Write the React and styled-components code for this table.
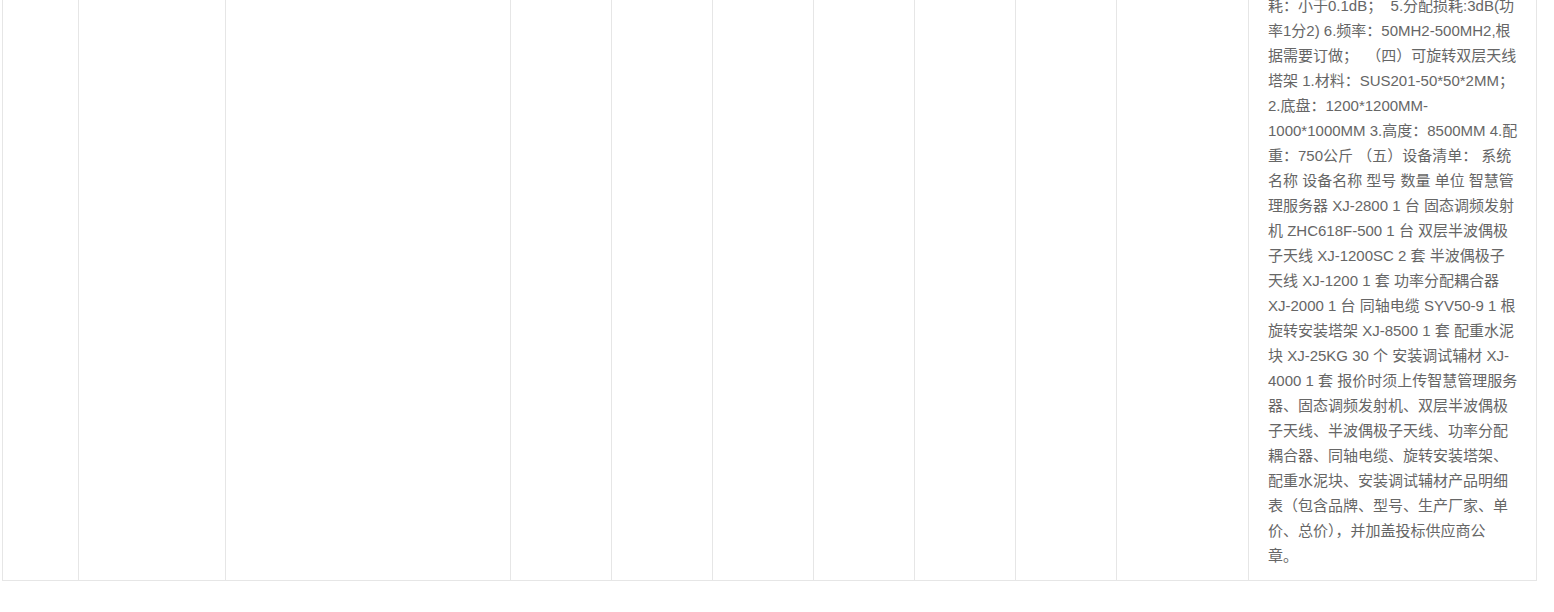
import React from 'react';
import styled, { createGlobalStyle } from 'styled-components';

const GlobalStyle = createGlobalStyle`
  html, body {
    margin: 0;
    padding: 0;
    background: #fff;
  }
  body {
    font-family: "Liberation Sans", "Noto Sans CJK SC", sans-serif;
    font-size: 15px;
    color: #666;
  }
`;

const Page = styled.div`
  height: 100vh;
  overflow: hidden;
  padding: 0 2px;
  box-sizing: border-box;
`;

// the capture is scrolled: the top of the row sits above the window
const Table = styled.table`
  width: 1535px;
  margin-top: -18px;
  table-layout: fixed;
  border-collapse: collapse;
  border-spacing: 0;
`;

const Cell = styled.td`
  border: 1px solid #e6e6e6;
  vertical-align: top;
  padding: 10px 19px 12px;
  line-height: 25px;
  color: #666;
`;

const Line = styled.span`
  display: block;
  white-space: pre;
`;

const widths = [76, 147, 285, 101, 101, 101, 101, 101, 101, 132, 288];

const lines = [
  '耗：小于0.1dB；  5.分配损耗:3dB(功',
  '率1分2) 6.频率：50MH2-500MH2,根',
  '据需要订做；  （四）可旋转双层天线',
  '塔架 1.材料：SUS201-50*50*2MM；',
  '2.底盘：1200*1200MM-',
  '1000*1000MM 3.高度：8500MM 4.配',
  '重：750公斤 （五）设备清单： 系统',
  '名称 设备名称 型号 数量 单位 智慧管',
  '理服务器 XJ-2800 1 台 固态调频发射',
  '机 ZHC618F-500 1 台 双层半波偶极',
  '子天线 XJ-1200SC 2 套 半波偶极子',
  '天线 XJ-1200 1 套 功率分配耦合器',
  'XJ-2000 1 台 同轴电缆 SYV50-9 1 根',
  '旋转安装塔架 XJ-8500 1 套 配重水泥',
  '块 XJ-25KG 30 个 安装调试辅材 XJ-',
  '4000 1 套 报价时须上传智慧管理服务',
  '器、固态调频发射机、双层半波偶极',
  '子天线、半波偶极子天线、功率分配',
  '耦合器、同轴电缆、旋转安装塔架、',
  '配重水泥块、安装调试辅材产品明细',
  '表（包含品牌、型号、生产厂家、单',
  '价、总价），并加盖投标供应商公',
  '章。',
];

export default function App() {
  return (
    <>
      <GlobalStyle />
      <Page>
        <Table>
          <colgroup>
            {widths.map((w, i) => (
              <col key={i} style={{ width: w }} />
            ))}
          </colgroup>
          <tbody>
            <tr>
              {widths.slice(0, -1).map((_, i) => (
                <Cell key={i} />
              ))}
              <Cell>
                {lines.map((t, i) => (
                  <Line key={i}>{t}</Line>
                ))}
              </Cell>
            </tr>
          </tbody>
        </Table>
      </Page>
    </>
  );
}
